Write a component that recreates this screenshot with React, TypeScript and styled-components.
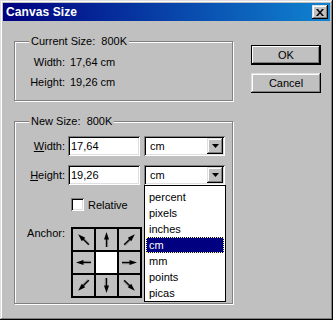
import React from 'react';
import styled, { createGlobalStyle } from 'styled-components';

const GlobalStyle = createGlobalStyle`
    html, body {
        margin: 0;
        padding: 0;
        background: #c0c0c0;
    }
    body {
        font-family: 'Liberation Sans', Arial, sans-serif;
        font-size: 11px;
        color: #000;
    }
`;

const raised = `
    box-shadow: inset -1px -1px 0 #000, inset 1px 1px 0 #dfdfdf,
        inset -2px -2px 0 #808080, inset 2px 2px 0 #fff;
`;

const sunken = `
    box-shadow: inset 1px 1px 0 #808080, inset -1px -1px 0 #fff,
        inset 2px 2px 0 #000, inset -2px -2px 0 #dfdfdf;
`;

const Window = styled.div`
    width: 333px;
    height: 320px;
    box-sizing: border-box;
    padding: 3px;
    background: #c0c0c0;
    display: flex;
    flex-direction: column;
    ${raised}
`;

const TitleBar = styled.div`
    height: 18px;
    flex: 0 0 18px;
    display: flex;
    align-items: center;
    justify-content: space-between;
    padding: 0 2px 0 3px;
    background: linear-gradient(to right, #000080, #1084d0);
`;

const Title = styled.span`
    color: #fff;
    font-weight: bold;
    font-size: 12px;
    letter-spacing: 0.1px;
`;

const CloseButton = styled.div`
    width: 16px;
    height: 14px;
    background: #c0c0c0;
    display: flex;
    align-items: center;
    justify-content: center;
    ${raised}
`;

const Body = styled.div`
    display: flex;
    padding: 13px 9px 0 11px;
    gap: 18px;
`;

const LeftColumn = styled.div`
    width: 219px;
    display: flex;
    flex-direction: column;
    gap: 13px;
`;

const RightColumn = styled.div`
    display: flex;
    flex-direction: column;
    gap: 8px;
    margin-top: 11px;
`;

const Button = styled.div<{ $default?: boolean }>`
    width: 70px;
    height: 20px;
    box-sizing: border-box;
    display: flex;
    align-items: center;
    justify-content: center;
    background: #c0c0c0;
    ${({ $default }) =>
        $default
            ? `
        border: 1px solid #000;
        box-shadow: inset -1px -1px 0 #000, inset 1px 1px 0 #fff,
            inset -2px -2px 0 #808080;
    `
            : raised}
`;

const GroupBox = styled.fieldset<{ $bottom: number; $top: number }>`
    margin: 0;
    padding: ${({ $top }) => $top}px 0 ${({ $bottom }) => $bottom}px 0;
    min-width: 0;
    border: 1px solid #808080;
    box-shadow: inset 1px 1px 0 #fff, 1px 1px 0 #fff;
`;

const Legend = styled.legend`
    margin-left: 14px;
    padding: 0 2px;
    line-height: 14px;
    background: #c0c0c0;
`;

const InfoGrid = styled.div`
    display: grid;
    grid-template-columns: 50px auto;
    column-gap: 5px;
    grid-auto-rows: 20px;
    align-items: center;
`;

const InfoLabel = styled.span`
    text-align: right;
`;

const FieldRow = styled.div<{ $gap?: number }>`
    display: flex;
    align-items: center;
    margin-top: ${({ $gap }) => $gap || 0}px;
`;

const FieldLabel = styled.label`
    width: 50px;
    margin-right: 3px;
    text-align: right;
    u {
        text-decoration: underline;
        text-underline-offset: 1px;
    }
`;

const TextBox = styled.div`
    width: 72px;
    height: 20px;
    box-sizing: border-box;
    padding: 0 0 0 3px;
    margin-right: 4px;
    background: #fff;
    display: flex;
    align-items: center;
    ${sunken}
`;

const Combo = styled.div`
    position: relative;
    width: 81px;
    height: 20px;
    box-sizing: border-box;
    padding: 2px;
    background: #fff;
    display: flex;
    align-items: center;
    ${sunken}
`;

const ComboText = styled.span`
    flex: 1;
    padding-left: 4px;
`;

const ComboArrow = styled.div`
    width: 16px;
    height: 16px;
    background: #c0c0c0;
    display: flex;
    align-items: center;
    justify-content: center;
    ${raised}
`;

const DropList = styled.ul`
    position: absolute;
    top: 100%;
    left: 0;
    width: 82px;
    box-sizing: border-box;
    margin: 0;
    padding: 3px 1px 0;
    list-style: none;
    background: #fff;
    border: 1px solid #000;
    z-index: 2;
`;

const DropItem = styled.li<{ $selected?: boolean }>`
    height: 16px;
    line-height: 16px;
    padding-left: 3px;
    background: ${({ $selected }) => ($selected ? '#000080' : '#fff')};
    color: ${({ $selected }) => ($selected ? '#fff' : '#000')};
    outline: ${({ $selected }) => ($selected ? '1px dotted #ffff80' : 'none')};
    outline-offset: -1px;
`;

const CheckRow = styled.div`
    display: flex;
    align-items: center;
    gap: 4px;
    margin: 13px 0 0 56px;
    height: 13px;
`;

const CheckBox = styled.div`
    width: 13px;
    height: 13px;
    box-sizing: border-box;
    background: #fff;
    ${sunken}
`;

const AnchorRow = styled.div`
    display: flex;
    align-items: flex-start;
    margin-top: 16px;
`;

const AnchorLabel = styled.span`
    width: 50px;
    margin-right: 6px;
    text-align: right;
    line-height: 13px;
`;

const AnchorGrid = styled.div`
    display: grid;
    grid-template-columns: repeat(3, 21px);
    grid-auto-rows: 21px;
    gap: 2px;
    padding: 2px;
    background: #000;
`;

const AnchorCell = styled.div<{ $center?: boolean }>`
    background: ${({ $center }) => ($center ? '#fff' : '#c0c0c0')};
    display: flex;
    align-items: center;
    justify-content: center;
`;

const Arrow = ({ angle }: { angle: number }) => (
    <svg width="21" height="21" viewBox="0 0 21 21">
        <g transform={`rotate(${angle} 10.5 10.5)`}>
            <line x1="11.5" y1="18" x2="11.5" y2="8" stroke="#999" strokeWidth="1.6" />
            <line x1="10.5" y1="18" x2="10.5" y2="8" stroke="#000" strokeWidth="1.4" />
            <polygon points="10.5,3 8,10.5 13,10.5" fill="#000" />
        </g>
    </svg>
);

const anchorAngles: (number | null)[] = [-45, 0, 45, -90, null, 90, -135, 180, 135];

const units = ['percent', 'pixels', 'inches', 'cm', 'mm', 'points', 'picas'];

const DownTriangle = () => (
    <svg width="7" height="4" viewBox="0 0 7 4">
        <polygon points="0,0 7,0 3.5,4" fill="#000" />
    </svg>
);

const App = () => (
    <>
        <GlobalStyle />
        <Window>
            <TitleBar>
                <Title>Canvas Size</Title>
                <CloseButton>
                    <svg width="8" height="7" viewBox="0 0 8 7">
                        <path d="M0 0h2l2 2.5L6 0h2L5 3.5 8 7H6L4 4.5 2 7H0l3-3.5z" fill="#000" />
                    </svg>
                </CloseButton>
            </TitleBar>
            <Body>
                <LeftColumn>
                    <GroupBox $top={4} $bottom={8}>
                        <Legend>Current Size:&nbsp; 800K</Legend>
                        <InfoGrid>
                            <InfoLabel>Width:</InfoLabel>
                            <span>17,64 cm</span>
                            <InfoLabel>Height:</InfoLabel>
                            <span>19,26 cm</span>
                        </InfoGrid>
                    </GroupBox>
                    <GroupBox $top={8} $bottom={5}>
                        <Legend>New Size:&nbsp; 800K</Legend>
                        <FieldRow>
                            <FieldLabel>
                                <u>W</u>idth:
                            </FieldLabel>
                            <TextBox>17,64</TextBox>
                            <Combo>
                                <ComboText>cm</ComboText>
                                <ComboArrow>
                                    <DownTriangle />
                                </ComboArrow>
                            </Combo>
                        </FieldRow>
                        <FieldRow $gap={9}>
                            <FieldLabel>
                                <u>H</u>eight:
                            </FieldLabel>
                            <TextBox>19,26</TextBox>
                            <Combo>
                                <ComboText>cm</ComboText>
                                <ComboArrow>
                                    <DownTriangle />
                                </ComboArrow>
                                <DropList>
                                    {units.map(unit => (
                                        <DropItem key={unit} $selected={unit === 'cm'}>
                                            {unit}
                                        </DropItem>
                                    ))}
                                </DropList>
                            </Combo>
                        </FieldRow>
                        <CheckRow>
                            <CheckBox />
                            <span>Relative</span>
                        </CheckRow>
                        <AnchorRow>
                            <AnchorLabel>Anchor:</AnchorLabel>
                            <AnchorGrid>
                                {anchorAngles.map((angle, i) => (
                                    <AnchorCell key={i} $center={angle === null}>
                                        {angle !== null && <Arrow angle={angle} />}
                                    </AnchorCell>
                                ))}
                            </AnchorGrid>
                        </AnchorRow>
                    </GroupBox>
                </LeftColumn>
                <RightColumn>
                    <Button $default>OK</Button>
                    <Button>Cancel</Button>
                </RightColumn>
            </Body>
        </Window>
    </>
);

export default App;
